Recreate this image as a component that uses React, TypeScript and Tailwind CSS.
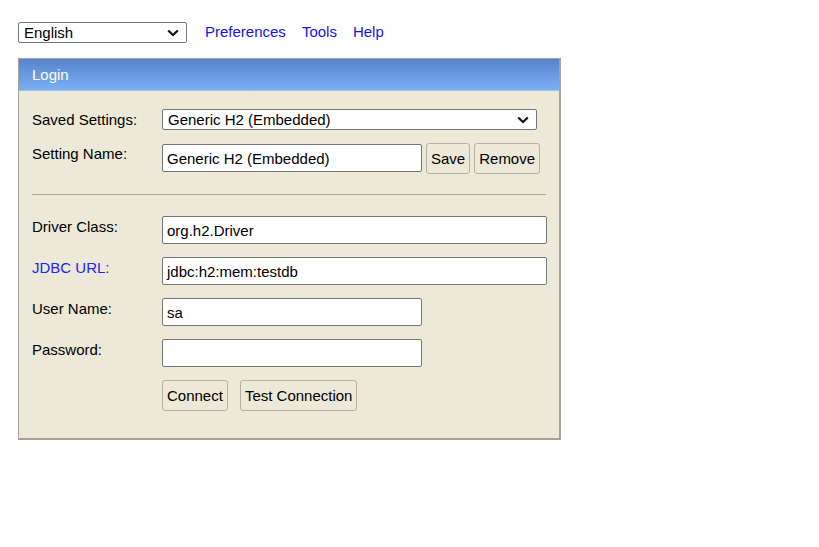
import React from "react";

const font = "font-['Liberation_Sans',Arial,sans-serif]";

function Chevron() {
  return (
    <svg width="12" height="8" viewBox="0 0 12 8" className="pointer-events-none absolute right-[8px] top-1/2 -translate-y-1/2">
      <path d="M1.2 1.5l4.8 4.6 4.8-4.6" fill="none" stroke="#111" strokeWidth="2.2" />
    </svg>
  );
}

function Select({ value, className }: { value: string; className: string }) {
  return (
    <div className={`relative ${className}`}>
      <div className="h-full w-full border border-[#767676] rounded-[2px] bg-white pl-[5px] text-[15px] leading-[19px] text-black">
        {value}
      </div>
      <Chevron />
    </div>
  );
}

function TextInput({ value, width }: { value: string; width: string }) {
  return (
    <div
      className={`${width} h-[28px] border border-[#767676] rounded-[2px] bg-white pl-[4px] pt-[1px] text-[15px] leading-[26px] text-black`}
    >
      {value}
    </div>
  );
}

function Btn({ label, h = "h-[31px]" }: { label: string; h?: string }) {
  return (
    <button
      className={`${h} px-[4px] border border-[#b4b1a3] rounded-[3px] bg-[#ece9d8] text-[15px] leading-none text-black`}
    >
      {label}
    </button>
  );
}

function FieldRow({
  label,
  value,
  width,
  blue = false,
}: {
  label: string;
  value: string;
  width: string;
  blue?: boolean;
}) {
  return (
    <div className="flex items-start">
      <div className={`w-[130px] pt-[2px] leading-[17px] ${blue ? "text-[#2424f0]" : "text-black"}`}>{label}</div>
      <TextInput value={value} width={width} />
    </div>
  );
}

export default function App() {
  return (
    <div className={`${font} min-h-[547px] bg-white pl-[18px] pt-[22px] text-[15px]`}>
      {/* top bar */}
      <div className="flex h-[21px] items-center">
        <Select value="English" className="w-[169px] h-[21px]" />
        <div className="ml-[18px] flex gap-[16px] text-[#1414f0]">
          <a>Preferences</a>
          <a>Tools</a>
          <a>Help</a>
        </div>
      </div>

      {/* login panel */}
      <div className="mt-[15px] w-[543px] border-l border-t border-r-2 border-b-2 border-[#a5a397] bg-[#ece9d8]">
        <div className="h-[32px] border-b border-[#9cc2f6] bg-gradient-to-b from-[#5784cb] to-[#7bafF3] pl-[13px] leading-[32px] text-white">
          Login
        </div>

        <div className="pl-[13px] pr-[12px] pt-[18px] pb-[27px]">
          <div className="flex items-center">
            <div className="w-[130px] leading-[17px]">Saved Settings:</div>
            <Select value="Generic H2 (Embedded)" className="w-[375px] h-[21px]" />
          </div>

          <div className="mt-[13px] flex items-start">
            <div className="w-[130px] pt-[2px] leading-[17px]">Setting Name:</div>
            <div className="mt-[1px]">
              <TextInput value="Generic H2 (Embedded)" width="w-[260px]" />
            </div>
            <div className="ml-[4px] flex gap-[4px]">
              <Btn label="Save" />
              <Btn label="Remove" />
            </div>
          </div>

          <div className="mt-[20px] h-px w-[514px] bg-[#a8a8a0]" />

          <div className="mt-[21px] flex flex-col gap-[13px]">
            <FieldRow label="Driver Class:" value="org.h2.Driver" width="w-[385px]" />
            <FieldRow label="JDBC URL:" value="jdbc:h2:mem:testdb" width="w-[385px]" blue />
            <FieldRow label="User Name:" value="sa" width="w-[260px]" />
            <FieldRow label="Password:" value="" width="w-[260px]" />
          </div>

          <div className="mt-[13px] flex gap-[12px] pl-[130px]">
            <Btn label="Connect" h="h-[31px]" />
            <Btn label="Test Connection" h="h-[31px]" />
          </div>
        </div>
      </div>
    </div>
  );
}
